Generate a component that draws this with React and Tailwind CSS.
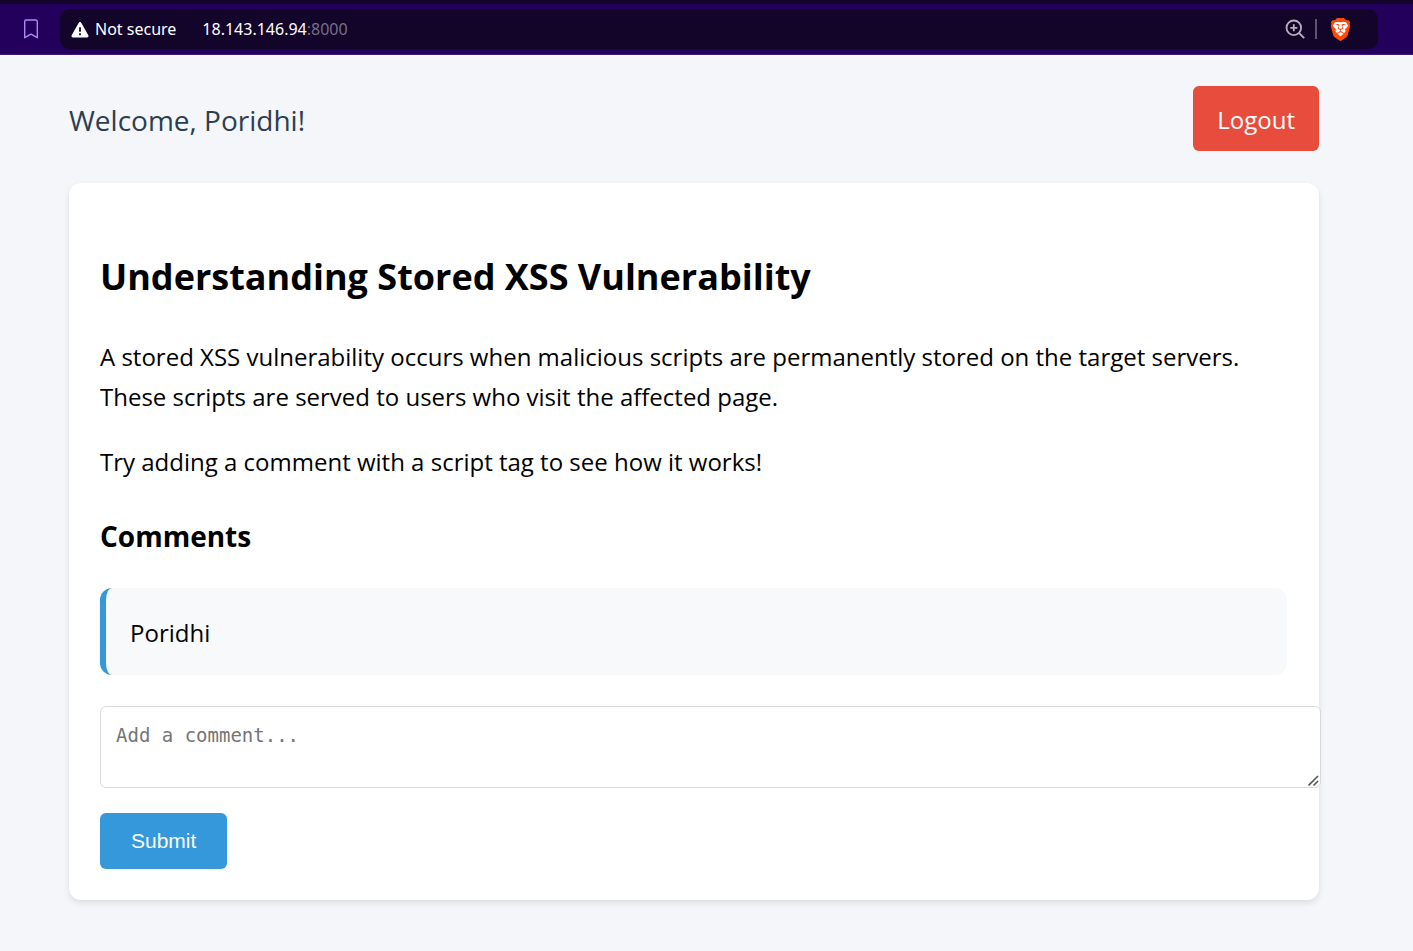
import { SiBrave } from "react-icons/si";

function BrowserBar() {
  return (
    <div className="flex items-center border-t-4 border-b border-t-[#13042a] border-b-[#3b1a75] bg-[#22005c] pt-[5px] pb-[5px] pr-[35px] font-['Noto_Sans','Open_Sans',sans-serif]">
      <button type="button" aria-label="Bookmark this page" className="flex w-[60px] items-center justify-center pl-[2px]">
        <svg width="16" height="20" viewBox="0 0 16 20" fill="none" stroke="#a78bf5" strokeWidth="1.4" strokeLinejoin="round">
          <path d="M1.7 2.5A1.5 1.5 0 0 1 3.2 1h9.600a1.5 1.5 0 0 1 1.5 1.5v16.2L8 15.2l-6.3 3.5z" />
        </svg>
      </button>
      <div className="flex h-10 flex-1 items-center rounded-[10px] bg-[#13042a] pl-[11px] pr-[26px] text-base text-white">
        <svg className="mt-[2px]" width="18" height="16" viewBox="0 0 18 16">
          <path d="M7.6.9a1.6 1.6 0 0 1 2.8 0l6.9 12.3c.6 1-.1 2.3-1.3 2.3H2c-1.2 0-1.9-1.3-1.3-2.3z" fill="#fff" />
          <path d="M9 5.2v4.5M9 11.3v2" stroke="#13042a" strokeWidth="1.8" />
        </svg>
        <span className="ml-[6px]">Not secure</span>
        <span className="ml-[26px]">
          18.143.146.94<span className="text-[#76708a]">:8000</span>
        </span>
        <div className="ml-auto flex items-center">
          <button type="button" aria-label="Zoom">
            <svg width="20" height="20" viewBox="0 0 20 20" fill="none" stroke="#b5b1bc" strokeWidth="1.8">
              <circle cx="8.8" cy="8.8" r="7.3" />
              <path d="M14 14l5.200 5.200M8.800 5.300v7M5.300 8.800h7" />
            </svg>
          </button>
          <span className="ml-[10px] h-5 w-[2px] bg-[#5d556b]" />
          <button type="button" aria-label="Brave Shields" className="ml-[12px] grid place-items-center">
            <svg className="col-start-1 row-start-1" width="23" height="23" viewBox="0 0 24 24">
              <path d="M5 4h14l1 4-3 9-5 4-5-4-3-9z" fill="#fff" />
            </svg>
            <SiBrave className="col-start-1 row-start-1 text-[#ff4a0c]" size={23} />
          </button>
        </div>
      </div>
    </div>
  );
}

export default function App() {
  return (
    <div className="min-h-screen bg-[#f5f6fa] font-['Open_Sans','Noto_Sans',sans-serif] text-2xl text-black">
      <BrowserBar />
      <div className="pt-[31px] pr-[94px] pb-[50px] pl-[69px]">
        <header className="flex items-center justify-between">
          <p className="pt-[2px] text-[28px] leading-[48px] text-[#2c3e50]">Welcome, Poridhi!</p>
          <a href="#logout" className="rounded-md bg-[#e84c3d] px-6 pt-[13px] pb-[11px] leading-[41px] text-white">
            Logout
          </a>
        </header>

        <main className="mt-8 rounded-xl bg-white pt-16 pr-8 pb-[31px] pl-[31px] shadow-[0_3px_6px_rgba(0,0,0,0.1)]">
          <h1 className="text-[36px] leading-[60px] font-bold">Understanding Stored XSS Vulnerability</h1>
          <p className="mt-[30px] leading-10">
            A stored XSS vulnerability occurs when malicious scripts are permanently stored on the target servers. These
            scripts are served to users who visit the affected page.
          </p>
          <p className="mt-[25px] leading-10">Try adding a comment with a script tag to see how it works!</p>

          <h2 className="mt-[31px] text-[28px] leading-[46px] font-bold">Comments</h2>
          <div className="mt-[29px] rounded-xl border-l-[6px] border-[#3498db] bg-[#f8f9fb] px-6 pt-6 pb-[22px] leading-[41px]">
            Poridhi
          </div>

          <form className="mt-[31px]" onSubmit={(event) => event.preventDefault()}>
            <div className="relative w-[calc(100%+34px)]">
              <textarea
                aria-label="Add a comment"
                placeholder="Add a comment..."
                className="block h-[82px] w-full resize-none rounded-md border border-[#d9d9d9] bg-white px-[15px] py-4 font-['DejaVu_Sans_Mono',monospace] text-[19px] leading-6 placeholder:text-[#757575]"
              />
              <svg className="pointer-events-none absolute right-[2px] bottom-[2px]" width="11" height="11" viewBox="0 0 11 11" stroke="#555" strokeWidth="1.6">
                <path d="M.5 10.5L10 1M5.5 10.5L10 6" />
              </svg>
            </div>
            <button
              type="submit"
              className="mt-[25px] rounded-md bg-[#3498db] px-[31px] py-4 font-['Liberation_Sans',sans-serif] text-[21px] leading-6 text-white"
            >
              Submit
            </button>
          </form>
        </main>
      </div>
    </div>
  );
}
